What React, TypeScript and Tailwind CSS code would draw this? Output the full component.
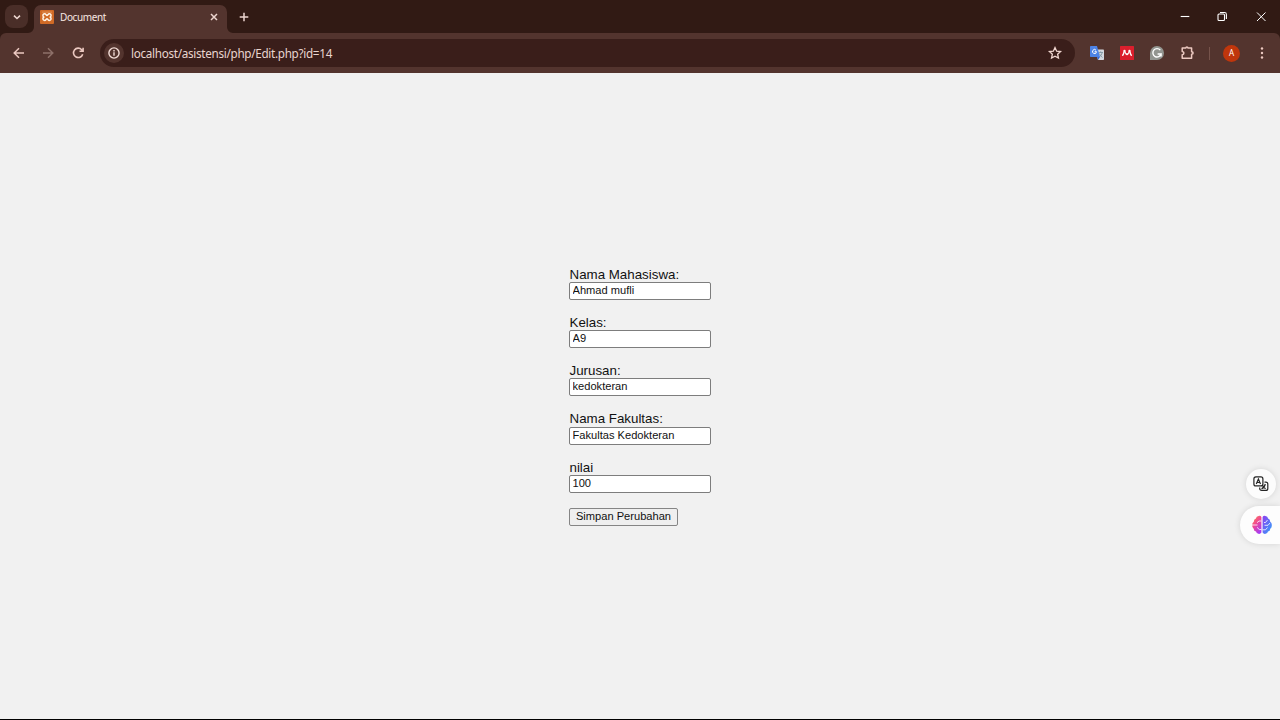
import { ReactNode } from "react";

const fields = [
  { label: "Nama Mahasiswa:", value: "Ahmad mufli" },
  { label: "Kelas:", value: "A9" },
  { label: "Jurusan:", value: "kedokteran" },
  { label: "Nama Fakultas:", value: "Fakultas Kedokteran" },
  { label: "nilai", value: "100" },
];

function Icon({ className, box = 16, children }: { className: string; box?: number; children: ReactNode }) {
  return (
    <svg
      className={"block shrink-0 " + className}
      viewBox={`0 0 ${box} ${box}`}
      fill="none"
      stroke="currentColor"
      strokeWidth="1.5"
    >
      {children}
    </svg>
  );
}

function TabStrip() {
  return (
    <div className="flex h-[33px] shrink-0 bg-[#311a14] text-[#ecd5cf]">
      <div className="ml-[5px] mt-[5px] flex h-[23px] w-[23px] items-center justify-center rounded-[8px] bg-[#4a2e28]">
        <Icon className="h-2.5 w-2.5" box={10}>
          <path d="M2 3.600 5 6.500 8 3.600" strokeWidth="1.600" />
        </Icon>
      </div>
      <svg className="mt-[27px] h-[6px] w-[6px]" viewBox="0 0 6 6">
        <path d="M6 0a6 6 0 0 1-6 6h6z" fill="#53342e" />
      </svg>
      <div className="mt-[5px] flex h-[28px] w-[193px] rounded-t-[7px] bg-[#53342e] pl-[6px]">
        <svg className="mt-[5px] h-[14px] w-[14px]" viewBox="0 0 14 14">
          <rect width="14" height="14" rx="1" fill="#d06a26" />
          <path d="M2 1.700h10v.8H2z" fill="#e59a62" />
          <path
            d="M4.600 3.800C6 3.800 6.200 5.400 7 5.400s1-1.600 2.400-1.600c1.900 0 2.200 2.100.9 3.300 1.300 1.200 1 3.300-.9 3.300C8 10.400 7.800 8.800 7 8.800s-1 1.600-2.400 1.600c-1.900 0-2.200-2.100-.9-3.300-1.300-1.200-1-3.300.9-3.300z"
            fill="none"
            stroke="#fff4e6"
            strokeWidth="1.500"
          />
        </svg>
        <span className="ml-[6px] mt-[4px] h-4 w-[60px] font-['Noto_Sans',sans-serif] text-[10px] leading-4 tracking-[-0.38px] text-[#f7e6e1]">
          Document
        </span>
        <Icon className="ml-[88.500px] mt-[7px] h-[10px] w-[10px]" box={10}>
          <path d="m2 2 6 6M8 2 2 8" />
        </Icon>
      </div>
      <svg className="mt-[27px] h-[6px] w-[6px]" viewBox="0 0 6 6">
        <path d="M0 0a6 6 0 0 0 6 6H0z" fill="#53342e" />
      </svg>
      <Icon className="ml-[5px] mt-[11px] h-3 w-3" box={12}>
        <path d="M6 1.700v8.600M1.700 6h8.600" />
      </Icon>
      <div className="ml-auto flex text-white">
        <Icon className="mt-[11px] h-3 w-3" box={12}>
          <path d="M1.700 5.500h8.600" strokeWidth="1.100" />
        </Icon>
        <Icon className="ml-[25px] mt-[11px] h-3 w-3" box={12}>
          <rect x="2" y="3" width="6.500" height="6.500" rx="1" strokeWidth="1.100" />
          <path d="M4 1.500h4.500q1.900 0 1.900 1.900V8" strokeWidth="1.100" />
        </Icon>
        <Icon className="ml-[27px] mr-[13px] mt-[11px] h-3 w-3" box={12}>
          <path d="m2 1.500 8.500 8.500M10.500 1.500 2 10" strokeWidth="1" />
        </Icon>
      </div>
    </div>
  );
}

function Toolbar() {
  return (
    <div className="h-[40px] shrink-0 bg-[#311a14]">
      <div className="flex h-[40px] items-center rounded-t-[6px] bg-[#53342e] text-[#ecc9c1]">
        <Icon className="ml-[11px] h-4 w-4">
          <path d="M13 8H3.500M8 3.200 3.200 8 8 12.800" />
        </Icon>
        <Icon className="ml-[13px] h-4 w-4 text-[#8e7069]">
          <path d="M3 8h9.500M8 3.200 12.800 8 8 12.800" />
        </Icon>
        <Icon className="ml-[14px] h-4 w-4">
          <path d="M12.700 9.200a4.700 4.700 0 1 1-1-4.500l1.300 1.300M13.100 2.800v3.500H9.500" strokeWidth="1.600" />
        </Icon>
        <div className="ml-[14px] flex h-[28px] w-[975px] items-center rounded-full bg-[#3a1e1a] pl-[4px]">
          <div className="flex h-5 w-5 items-center justify-center rounded-full bg-[#53342e] text-[#f3ddd7]">
            <Icon className="h-[14px] w-[14px]" box={14}>
              <circle cx="7" cy="7" r="5.100" strokeWidth="1.400" />
              <path d="M7 6.300v3.400M7 4.100v1.300" strokeWidth="1.400" />
            </Icon>
          </div>
          <span className="ml-[7px] whitespace-nowrap font-['Noto_Sans',sans-serif] text-[11.700px] leading-4 tracking-[-0.3px] text-[#e9d5cf]">
            localhost/asistensi/php/Edit.php?id=14
          </span>
          <Icon className="ml-auto mr-[12px] h-4 w-4 text-[#f0d6cf]">
            <path d="m8 2.600 1.650 3.550 3.900.45-2.900 2.650.8 3.850L8 11.150 4.550 13.100l.8-3.850-2.900-2.650 3.900-.45z" strokeWidth="1.300" />
          </Icon>
        </div>
        <svg className="ml-[15px] h-[14px] w-[14px] shrink-0" viewBox="0 0 14 14">
          <path d="M5 3.500h8.200q.8 0 .8.800v9q0 .7-.8.700H8z" fill="#d5d9df" />
          <path d="M8.500 6.500h4.500M10.700 5.300v1.200M12.300 6.500q-.8 3-3 4.500M9.300 7.500q1 2.500 3.200 4" stroke="#78909c" strokeWidth=".8" fill="none" />
          <path d="M.7 0H7l3 11H.7Q0 11 0 10.300V.7Q0 0 .7 0z" fill="#4d83e6" />
          <path d="m7 11 3 0-2 3z" fill="#3467d6" />
          <path d="M6 4.200a2 2 0 1 0 .5 1.500H4.600" stroke="#fff" strokeWidth="1" fill="none" />
        </svg>
        <svg className="ml-[16px] h-[14px] w-[14px] shrink-0" viewBox="0 0 14 14">
          <rect width="14" height="14" rx=".5" fill="#db1f2d" />
          <path d="M2 9.300q1.400 0 1.500-1.600l.7-2M12 9.300q-1.400 0-1.500-1.600l-.7-2" fill="none" stroke="#fff" strokeWidth="1.400" />
          <path d="m5 5.500 1 3M9 5.500l-1 3" stroke="#fff" strokeWidth="1" />
          <circle cx="4.500" cy="5" r="1.200" fill="#fff" />
          <circle cx="9.500" cy="5" r="1.200" fill="#fff" />
          <circle cx="7" cy="8.200" r="1.100" fill="#fff" />
        </svg>
        <svg className="ml-[16px] h-[14px] w-[14px] shrink-0" viewBox="0 0 14 14">
          <path d="M0 14V7a7 7 0 1 1 7 7z" fill="#929590" />
          <path d="M10.300 4.100A4.200 4.200 0 1 0 11.100 8H7.600M11.100 8v2.400" stroke="#fff" strokeWidth="1.400" fill="none" />
        </svg>
        <Icon className="ml-[15px] h-4 w-4">
          <path d="M3.200 3.100H6.900q0-1 1-1t1 1h3.700v3.700q1.500 0 1.500 1.200t-1.500 1.200v4.100H3.200v-3.500q1.700-.3 1.700-1.700T3.200 6.500z" strokeLinejoin="round" />
        </Icon>
        <div className="ml-[14px] h-[13px] w-px bg-[#76534b]" />
        <div className="ml-[13px] flex h-[17px] w-[17px] items-center justify-center rounded-full bg-[#bf360c] font-['Noto_Sans',sans-serif] text-[8px] leading-none text-white">
          A
        </div>
        <svg className="ml-[14px] h-4 w-4 shrink-0" viewBox="0 0 16 16" fill="currentColor">
          <circle cx="8" cy="3.500" r="1.200" />
          <circle cx="8" cy="8" r="1.200" />
          <circle cx="8" cy="12.500" r="1.200" />
        </svg>
      </div>
    </div>
  );
}

function EditForm() {
  return (
    <form className="ml-[569px] mt-[193.500px] w-[142px] font-['Liberation_Sans',Arial,sans-serif] text-[#111]" onSubmit={(e) => e.preventDefault()}>
      {fields.map((f) => (
        <label key={f.label} className="block h-[48.33px] text-[13.33px] leading-[15.330px]">
          <span className="block h-[15.33px] pl-[0.500px]">{f.label}</span>
          <input
            defaultValue={f.value}
            className="block h-[18px] w-[142px] rounded-[2px] border border-[#7d7d7d] bg-white px-[2.500px] pb-[2px] text-[11.11px] leading-[14px] outline-none"
          />
        </label>
      ))}
      <button className="block h-[18px] w-[109px] whitespace-nowrap rounded-[2px] border border-[#858585] bg-[#efefef] pb-px text-center text-[11.11px] leading-[15px]">
        Simpan Perubahan
      </button>
    </form>
  );
}

function FloatingTools() {
  return (
    <div className="absolute right-0 top-[469px] flex flex-col items-end gap-[7px]">
      <div className="mr-[4px] flex h-[30px] w-[30px] items-center justify-center rounded-full bg-[#fcfcfc] shadow-[0_0_6px_rgba(0,0,0,0.12)]">
        <svg className="h-4 w-4" viewBox="0 0 16 16" fill="none" stroke="#252525" strokeWidth="1.200">
          <rect x=".9" y=".9" width="9" height="9" rx="2" />
          <path d="m3.300 8 2.100-5 2.100 5M4.100 6.500h2.700M11.500 6.100h1.300q2 0 2 2v4.300q0 2-2 2H8.700q-2 0-2-2v-.8M8.500 12.700q3-1 3.800-4.700M9 9l3.500 3.800" />
        </svg>
      </div>
      <div className="flex h-[38px] w-[40px] items-center rounded-l-full bg-[#fdfdfd] pl-[12px] shadow-[0_0_6px_rgba(0,0,0,0.12)]">
        <svg className="h-5 w-5" viewBox="0 0 20 20">
          <defs>
            <linearGradient id="left" x1="0" y1="0" x2=".6" y2="1">
              <stop stopColor="#ff8a45" />
              <stop offset=".5" stopColor="#f04894" />
              <stop offset="1" stopColor="#a93cf0" />
            </linearGradient>
            <linearGradient id="right" x1="0" y1="0" x2="1" y2="1">
              <stop stopColor="#8e3df0" />
              <stop offset="1" stopColor="#31a5fb" />
            </linearGradient>
          </defs>
          <path d="M9.400 2v15.500q-1 1.700-3 1.300-2-.2-2.400-2.200-2.300-.4-2.200-2.700Q0 12.500.2 10.200 0 7.800 1.800 6.700 1.600 4.200 3.900 3.500 4.300 1.100 6.600.9 8.700.5 9.400 2z" fill="url(#left)" />
          <path d="M10.600 2v15.500q1 1.700 3 1.300 2-.2 2.400-2.200 2.300-.4 2.200-2.700 1.800-1.400 1.600-3.700.2-2.400-1.600-3.500.2-2.500-2.100-3.200Q15.700 1.100 13.400.9 11.300.5 10.600 2z" fill="url(#right)" />
          <path d="M9.400 6H7L5 7.700M0 10h5.500M9.400 14.500H7.300L5 12.300M12 7.500h1.500L15.500 5M12.500 10.300H16l2-2.300M10.600 14.800h2.900l2-2.300" stroke="#fff" strokeWidth=".8" fill="none" />
        </svg>
      </div>
    </div>
  );
}

export default function App() {
  return (
    <div className="relative flex h-[720px] w-[1280px] flex-col overflow-hidden border-b border-black bg-[#f1f1f1]">
      <TabStrip />
      <Toolbar />
      <EditForm />
      <FloatingTools />
    </div>
  );
}
